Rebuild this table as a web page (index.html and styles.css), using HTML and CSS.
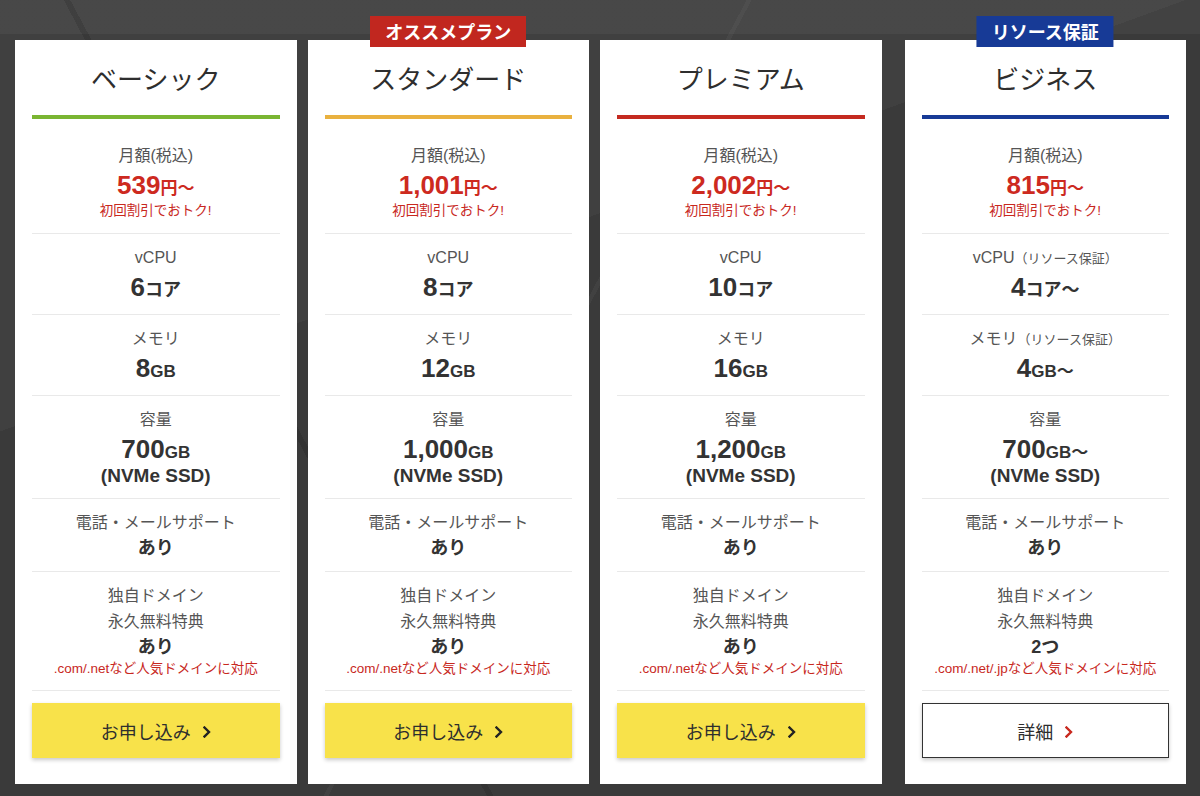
FILE: index.html
```html
<!DOCTYPE html>
<html lang="ja">
<head>
<meta charset="utf-8">
<title>料金プラン</title>
<link rel="stylesheet" href="styles.css">
</head>
<body>
<main class="plans">
  <section class="plan plan--basic">
    <h2 class="plan__name">ベーシック</h2>
    <div class="plan__bar"></div>
    <div class="row row--price">
      <p class="label">月額(税込)</p>
      <p class="price"><span class="num">539</span><span class="unit">円〜</span></p>
      <p class="note">初回割引でおトク!</p>
    </div>
    <div class="row">
      <p class="label">vCPU</p>
      <p class="value"><span class="num">6</span><span class="unit">コア</span></p>
    </div>
    <div class="row">
      <p class="label">メモリ</p>
      <p class="value"><span class="num">8</span><span class="unit unit--gb">GB</span></p>
    </div>
    <div class="row">
      <p class="label">容量</p>
      <p class="value"><span class="num">700</span><span class="unit unit--gb">GB</span></p>
      <p class="sub">(NVMe SSD)</p>
    </div>
    <div class="row">
      <p class="label">電話・メールサポート</p>
      <p class="yes"><span>あり</span></p>
    </div>
    <div class="row">
      <p class="label">独自ドメイン</p>
      <p class="label">永久無料特典</p>
      <p class="yes"><span>あり</span></p>
      <p class="note">.com/.netなど人気ドメインに対応</p>
    </div>
    <a class="btn btn--apply" href="#">お申し込み<svg class="chev" viewBox="0 0 8 12" width="8" height="12"><path d="M1.5 1.5 L6 6 L1.5 10.5" /></svg></a>
  </section>

  <section class="plan plan--standard">
    <span class="badge badge--red">オススメプラン</span>
    <h2 class="plan__name">スタンダード</h2>
    <div class="plan__bar"></div>
    <div class="row row--price">
      <p class="label">月額(税込)</p>
      <p class="price"><span class="num">1,001</span><span class="unit">円〜</span></p>
      <p class="note">初回割引でおトク!</p>
    </div>
    <div class="row">
      <p class="label">vCPU</p>
      <p class="value"><span class="num">8</span><span class="unit">コア</span></p>
    </div>
    <div class="row">
      <p class="label">メモリ</p>
      <p class="value"><span class="num">12</span><span class="unit unit--gb">GB</span></p>
    </div>
    <div class="row">
      <p class="label">容量</p>
      <p class="value"><span class="num">1,000</span><span class="unit unit--gb">GB</span></p>
      <p class="sub">(NVMe SSD)</p>
    </div>
    <div class="row">
      <p class="label">電話・メールサポート</p>
      <p class="yes"><span>あり</span></p>
    </div>
    <div class="row">
      <p class="label">独自ドメイン</p>
      <p class="label">永久無料特典</p>
      <p class="yes"><span>あり</span></p>
      <p class="note">.com/.netなど人気ドメインに対応</p>
    </div>
    <a class="btn btn--apply" href="#">お申し込み<svg class="chev" viewBox="0 0 8 12" width="8" height="12"><path d="M1.5 1.5 L6 6 L1.5 10.5" /></svg></a>
  </section>

  <section class="plan plan--premium">
    <h2 class="plan__name">プレミアム</h2>
    <div class="plan__bar"></div>
    <div class="row row--price">
      <p class="label">月額(税込)</p>
      <p class="price"><span class="num">2,002</span><span class="unit">円〜</span></p>
      <p class="note">初回割引でおトク!</p>
    </div>
    <div class="row">
      <p class="label">vCPU</p>
      <p class="value"><span class="num">10</span><span class="unit">コア</span></p>
    </div>
    <div class="row">
      <p class="label">メモリ</p>
      <p class="value"><span class="num">16</span><span class="unit unit--gb">GB</span></p>
    </div>
    <div class="row">
      <p class="label">容量</p>
      <p class="value"><span class="num">1,200</span><span class="unit unit--gb">GB</span></p>
      <p class="sub">(NVMe SSD)</p>
    </div>
    <div class="row">
      <p class="label">電話・メールサポート</p>
      <p class="yes"><span>あり</span></p>
    </div>
    <div class="row">
      <p class="label">独自ドメイン</p>
      <p class="label">永久無料特典</p>
      <p class="yes"><span>あり</span></p>
      <p class="note">.com/.netなど人気ドメインに対応</p>
    </div>
    <a class="btn btn--apply" href="#">お申し込み<svg class="chev" viewBox="0 0 8 12" width="8" height="12"><path d="M1.5 1.5 L6 6 L1.5 10.5" /></svg></a>
  </section>

  <section class="plan plan--business">
    <span class="badge badge--blue">リソース保証</span>
    <h2 class="plan__name">ビジネス</h2>
    <div class="plan__bar"></div>
    <div class="row row--price">
      <p class="label">月額(税込)</p>
      <p class="price"><span class="num">815</span><span class="unit">円〜</span></p>
      <p class="note">初回割引でおトク!</p>
    </div>
    <div class="row">
      <p class="label">vCPU<span class="label__small">（リソース保証）</span></p>
      <p class="value"><span class="num">4</span><span class="unit">コア〜</span></p>
    </div>
    <div class="row">
      <p class="label">メモリ<span class="label__small">（リソース保証）</span></p>
      <p class="value"><span class="num">4</span><span class="unit unit--gb">GB〜</span></p>
    </div>
    <div class="row">
      <p class="label">容量</p>
      <p class="value"><span class="num">700</span><span class="unit unit--gb">GB〜</span></p>
      <p class="sub">(NVMe SSD)</p>
    </div>
    <div class="row">
      <p class="label">電話・メールサポート</p>
      <p class="yes"><span>あり</span></p>
    </div>
    <div class="row">
      <p class="label">独自ドメイン</p>
      <p class="label">永久無料特典</p>
      <p class="yes"><span>2つ</span></p>
      <p class="note">.com/.net/.jpなど人気ドメインに対応</p>
    </div>
    <a class="btn btn--detail" href="#">詳細<svg class="chev" viewBox="0 0 8 12" width="8" height="12"><path d="M1.5 1.5 L6 6 L1.5 10.5" /></svg></a>
  </section>
</main>
</body>
</html>
```

FILE: styles.css
```css
* {
  box-sizing: border-box;
}

html,
body {
  margin: 0;
  padding: 0;
}

body {
  width: 1200px;
  height: 796px;
  overflow: hidden;
  font-family: "Liberation Sans", "Noto Sans CJK JP", sans-serif;
  color: #333;
  background-color: #3b3b3b;
  background-image:
    linear-gradient(118deg, transparent 0 46%, rgba(255,255,255,0.035) 46% 46.3%, transparent 46.3% 100%),
    linear-gradient(62deg, transparent 0 30%, rgba(0,0,0,0.12) 30% 30.4%, transparent 30.4% 100%),
    linear-gradient(160deg, rgba(255,255,255,0.03) 0 35%, transparent 35% 100%),
    linear-gradient(180deg, #424242 0 34px, #3a3a3a 34px 100%);
}

.plans {
  display: flex;
  align-items: flex-start;
  gap: 11px;
  padding: 40px 0 0 15px;
}

.plan {
  position: relative;
  width: 281.5px;
  flex: 0 0 281.5px;
  display: flex;
  flex-direction: column;
  background: #fff;
  padding: 18px 17px 26px;
  text-align: center;
}

.plan > * {
  flex-shrink: 0;
}

.plan--business {
  margin-left: 12px;
}

.badge {
  position: absolute;
  top: -24px;
  left: 50%;
  transform: translateX(-50%);
  height: 31px;
  padding: 0 15px;
  line-height: 31px;
  font-size: 18px;
  font-weight: 700;
  color: #fff;
  white-space: nowrap;
  font-family: "Noto Sans CJK JP", sans-serif;
}

.badge--red {
  background: #c1271f;
}

.badge--blue {
  background: #173a96;
}

.plan__name {
  margin: 0;
  height: 40px;
  font-size: 26px;
  line-height: 40px;
  font-weight: 400;
  color: #2e2e2e;
  font-family: "Noto Sans CJK JP", sans-serif;
}

.plan__bar {
  margin-top: 17px;
  height: 4px;
}

.plan--basic .plan__bar { background: #7ab532; }
.plan--standard .plan__bar { background: #e9b13f; }
.plan--premium .plan__bar { background: #c42a20; }
.plan--business .plan__bar { background: #173a96; }

.row {
  padding: 11px 0 11px;
  border-bottom: 1px solid #e9e9e9;
}

.row--price {
  padding: 24px 0 12px;
}

.row p {
  margin: 0;
  overflow: hidden;
  white-space: nowrap;
}

.label {
  height: 26px;
  font-size: 16px;
  line-height: 26px;
  color: #555;
}

.label__small {
  font-size: 13px;
  line-height: 1;
}

.value,
.price {
  height: 32px;
  font-size: 26px;
  line-height: 32px;
  font-weight: 700;
  color: #333;
}

.price {
  color: #cd2a1f;
}

.num {
  font-size: 26px;
  line-height: 1;
}

.unit {
  font-size: 18px;
  line-height: 1;
  font-family: "Noto Sans CJK JP", sans-serif;
  font-weight: 700;
}

.unit--gb {
  font-family: "Liberation Sans", "Noto Sans CJK JP", sans-serif;
  font-size: 17px;
}

.price .unit {
  font-size: 17px;
}

.sub {
  height: 22px;
  font-size: 19px;
  line-height: 22px;
  font-weight: 700;
  color: #333;
}

.yes {
  height: 24px;
  font-size: 18px;
  line-height: 24px;
  font-weight: 700;
  color: #333;
}

.yes span {
  line-height: 1;
}

.note {
  height: 20px;
  font-size: 13.5px;
  line-height: 20px;
  color: #c8281e;
}

.btn {
  margin-top: 12px;
  height: 55px;
  display: flex;
  align-items: center;
  justify-content: center;
  gap: 12px;
  font-size: 18px;
  color: #2e2e2e;
  text-decoration: none;
  font-family: "Noto Sans CJK JP", sans-serif;
  box-shadow: 0 2px 4px rgba(0, 0, 0, 0.22);
}

.btn--apply {
  background: #f8e24a;
}

.btn--detail {
  background: #fff;
  border: 1px solid #333;
}

.chev {
  display: block;
  margin-top: 2px;
}

.chev path {
  fill: none;
  stroke: #222;
  stroke-width: 2.4;
  stroke-linecap: square;
  stroke-linejoin: miter;
}

.btn--detail .chev path {
  stroke: #c8281e;
}
```
